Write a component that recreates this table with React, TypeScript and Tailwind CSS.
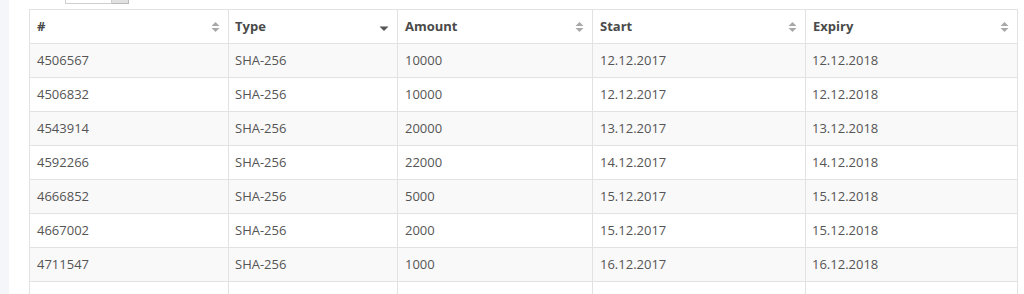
import React from "react";

interface Row {
  id: string;
  type: string;
  amount: string;
  start: string;
  expiry: string;
}

const rows: Row[] = [
  { id: "4506567", type: "SHA-256", amount: "10000", start: "12.12.2017", expiry: "12.12.2018" },
  { id: "4506832", type: "SHA-256", amount: "10000", start: "12.12.2017", expiry: "12.12.2018" },
  { id: "4543914", type: "SHA-256", amount: "20000", start: "13.12.2017", expiry: "13.12.2018" },
  { id: "4592266", type: "SHA-256", amount: "22000", start: "14.12.2017", expiry: "14.12.2018" },
  { id: "4666852", type: "SHA-256", amount: "5000", start: "15.12.2017", expiry: "15.12.2018" },
  { id: "4667002", type: "SHA-256", amount: "2000", start: "15.12.2017", expiry: "15.12.2018" },
  { id: "4711547", type: "SHA-256", amount: "1000", start: "16.12.2017", expiry: "16.12.2018" },
  { id: "", type: "", amount: "", start: "", expiry: "" },
];

const columns = [
  { label: "#", width: "w-[199px]", sort: "both" },
  { label: "Type", width: "w-[169px]", sort: "desc" },
  { label: "Amount", width: "w-[195px]", sort: "both" },
  { label: "Start", width: "w-[213px]", sort: "both" },
  { label: "Expiry", width: "w-[212px]", sort: "both" },
];

function SortIcon({ kind }: { kind: string }) {
  if (kind === "desc") {
    return (
      <svg width="10" height="12" viewBox="0 0 10 12" className="shrink-0">
        <path d="M0.5 5.5 L9.5 5.5 L5 10 Z" fill="#555" />
      </svg>
    );
  }
  return (
    <svg width="9" height="12" viewBox="0 0 9 12" className="shrink-0">
      <path d="M0.5 5 L8.5 5 L4.5 1 Z" fill="#a8a8a8" />
      <path d="M0.5 7 L8.5 7 L4.5 11 Z" fill="#a8a8a8" />
    </svg>
  );
}

export default function App() {
  return (
    <div
      className="flex w-[1024px] h-[294px] overflow-hidden bg-white text-[13px] text-[#555]"
      style={{ fontFamily: '"Open Sans", sans-serif' }}
    >
      {/* Sidebar edge */}
      <div className="w-[9px] shrink-0 bg-[#f4f6f9]" />

      {/* Content */}
      <div className="flex-1 pl-[20px] pr-[7px]">
        {/* Length selector (mostly scrolled away) */}
        <div className="h-[4px] overflow-hidden flex items-end pl-[36px]">
          <div className="flex h-[20px] shrink-0">
            <div className="w-[47px] border border-[#cfcfcf] bg-white" />
            <div className="w-[17px] border border-l-0 border-[#b9b9b9] bg-[#e1e1e1]" />
          </div>
        </div>

        <table className="mt-[5px] w-[988px] table-fixed border-collapse">
          <thead>
            <tr className="h-[34px]">
              {columns.map((c, i) => (
                <th
                  key={c.label}
                  className={`${c.width} border border-[#e2e2e2] ${i === 1 ? "pl-[6px]" : "pl-[7px]"} pr-[8px] text-left font-bold text-[#4a4a4a]`}
                >
                  <div className="flex items-center justify-between">
                    <span>{c.label}</span>
                    <SortIcon kind={c.sort} />
                  </div>
                </th>
              ))}
            </tr>
          </thead>
          <tbody>
            {rows.map((r, i) => (
              <tr key={i} className={`h-[34px] ${i % 2 === 0 ? "bg-[#f9f9f9]" : "bg-white"}`}>
                <td className="border border-[#e2e2e2] px-[7px]">{r.id}</td>
                <td className="border border-[#e2e2e2] px-[6px]">{r.type}</td>
                <td className="border border-[#e2e2e2] px-[7px]">{r.amount}</td>
                <td className="border border-[#e2e2e2] px-[7px]">{r.start}</td>
                <td className="border border-[#e2e2e2] px-[6px]">{r.expiry}</td>
              </tr>
            ))}
          </tbody>
        </table>
      </div>
    </div>
  );
}
